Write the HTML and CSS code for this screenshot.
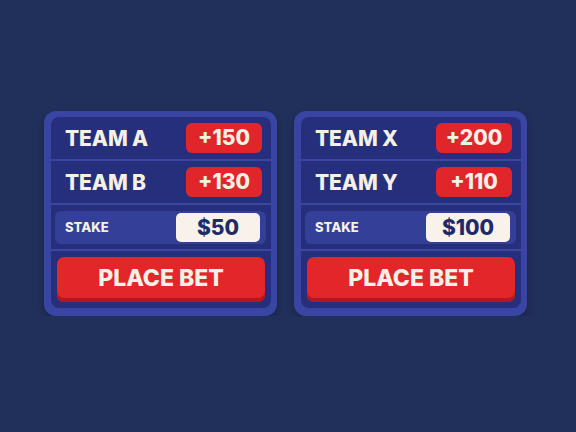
FILE: index.html
```html
<!DOCTYPE html>
<html lang="en">
<head>
  <meta charset="UTF-8">
  <meta name="viewport" content="width=device-width, initial-scale=1.0">
  <title>Bet Slips</title>
  <link rel="stylesheet" href="styles.css">
</head>
<body>

  <div class="board">
    <!-- Slip 1 -->
    <div class="slip">
      <div class="panel">
        <div class="row">
          <span class="team">TEAM A</span>
          <span class="odds">+150</span>
        </div>
        <div class="row">
          <span class="team">TEAM B</span>
          <span class="odds">+130</span>
        </div>
        <div class="row stake-row">
          <div class="stake">
            <span class="stake-label">STAKE</span>
            <span class="stake-value">$50</span>
          </div>
        </div>
        <div class="bet-row">
          <button class="bet-btn">PLACE BET</button>
        </div>
      </div>
    </div>

    <!-- Slip 2 -->
    <div class="slip">
      <div class="panel">
        <div class="row">
          <span class="team">TEAM X</span>
          <span class="odds">+200</span>
        </div>
        <div class="row">
          <span class="team">TEAM Y</span>
          <span class="odds">+110</span>
        </div>
        <div class="row stake-row">
          <div class="stake">
            <span class="stake-label">STAKE</span>
            <span class="stake-value">$100</span>
          </div>
        </div>
        <div class="bet-row">
          <button class="bet-btn">PLACE BET</button>
        </div>
      </div>
    </div>
  </div>

</body>
</html>
```

FILE: styles.css
```css
body {
  margin: 0;
  padding: 0;
  background-color: #212f5b;
  font-family: Inter, "Open Sans", sans-serif;
}
.board {
  display: flex;
  justify-content: center;
  gap: 17px;
  padding-top: 111px;
  padding-right: 5px;
}
.slip {
  width: 233px;
  padding: 6px 6px 8px 7px;
  box-sizing: border-box;
  background-color: #3a45a3;
  border-radius: 12px;
  box-shadow: 0 4px 6px rgba(10, 16, 40, 0.35);
}
.panel {
  background-color: #252f7c;
  border-radius: 8px;
  overflow: hidden;
}
.row {
  height: 42px;
  display: flex;
  align-items: center;
  justify-content: space-between;
  padding: 0 9px 0 14px;
  border-bottom: 2px solid #3b469e;
}
.team {
  color: #f6f0e6;
  font-size: 21px;
  font-weight: 800;
  letter-spacing: -0.1px;
}
.odds {
  width: 76px;
  height: 30px;
  line-height: 30px;
  text-align: center;
  background-color: #e1262b;
  border-radius: 6px;
  color: #f6f0e6;
  font-size: 21px;
  font-weight: 800;
}
.stake-row {
  height: 44px;
  padding: 0 5px 0 4px;
}
.stake {
  flex: 1;
  height: 33px;
  display: flex;
  align-items: center;
  justify-content: space-between;
  padding: 0 6px 0 10px;
  background-color: #343f98;
  border-radius: 6px;
}
.stake-label {
  color: #f6f0e6;
  font-size: 13px;
  font-weight: 800;
}
.stake-value {
  width: 84px;
  height: 29px;
  line-height: 29px;
  text-align: center;
  background-color: #f8f2ea;
  border-radius: 5px;
  color: #1f2a68;
  font-size: 21px;
  font-weight: 800;
}
.bet-row {
  padding: 6px;
}
.bet-btn {
  display: block;
  width: 100%;
  height: 45px;
  border: none;
  border-radius: 7px;
  background-color: #e2262a;
  box-shadow: inset 0 -4px 0 #b5171e;
  color: #f6f0e6;
  font-family: inherit;
  font-size: 23px;
  font-weight: 800;
  padding: 0 0 3px 0;
  cursor: pointer;
}
```
